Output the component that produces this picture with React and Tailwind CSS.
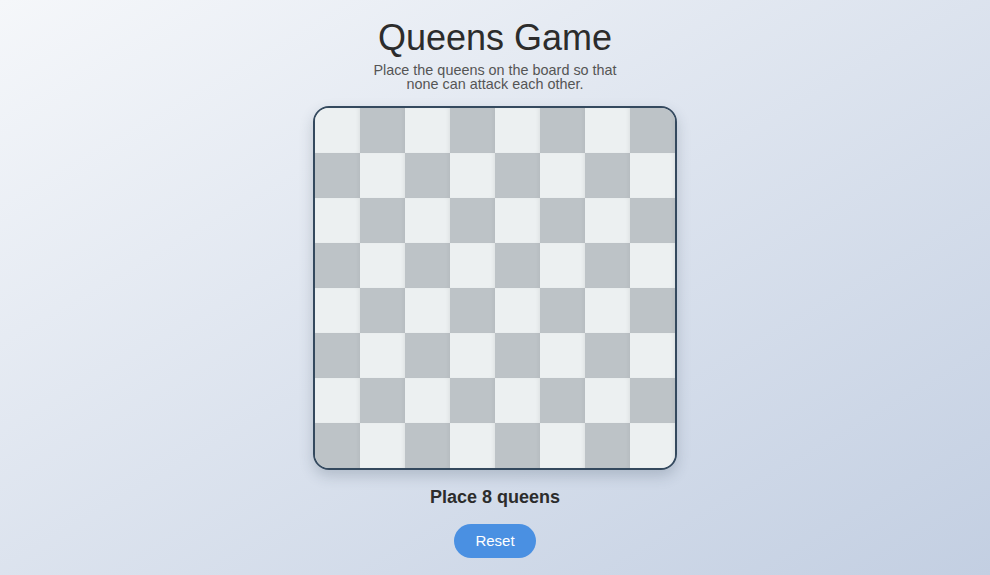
import { useState } from "react";

function Board() {
	const rows = Array.from({ length: 8 }, (_, r) => r);
	const cols = Array.from({ length: 8 }, (_, c) => c);

	return (
		<div className="grid grid-cols-[repeat(8,45px)] overflow-hidden rounded-2xl border-2 border-[#34495e] shadow-[0_6px_14px_rgba(44,62,80,0.22)]">
			{rows.map((r) =>
				cols.map((c) => (
					<div
						key={`${r}-${c}`}
						className={
							(r + c) % 2 === 0
								? "h-[45px] w-[45px] bg-[#ecf0f1] shadow-[inset_-3px_0_4px_-2px_rgba(0,0,0,0.07)]"
								: "h-[45px] w-[45px] bg-[#bdc3c7] shadow-[inset_-3px_0_4px_-2px_rgba(0,0,0,0.05)]"
						}
					/>
				))
			)}
		</div>
	);
}

export default function App() {
	const [queens, setQueens] = useState(8);

	return (
		<div className="flex h-[575px] w-full flex-col items-center bg-gradient-to-br from-[#f5f7fa] to-[#c3cfe2] font-['Liberation_Sans',Arial,sans-serif]">
			<h1 className="mt-[17px] text-[36px] leading-[42px] text-[#2c2c2c]">
				Queens Game
			</h1>
			<p className="mt-[4px] w-[260px] text-center text-[14.4px] leading-[14px] text-[#555]">
				Place the queens on the board so that none can attack each other.
			</p>
			<div className="mt-[15px]">
				<Board />
			</div>
			<div className="mt-[17px] text-[18px] font-bold leading-[21px] text-[#2c2c2c]">
				Place {queens} queens
			</div>
			<button
				className="mt-[16px] h-[34px] w-[82px] rounded-full bg-[#4a90e2] text-[15px] text-white"
				onClick={() => setQueens(8)}
			>
				Reset
			</button>
		</div>
	);
}
